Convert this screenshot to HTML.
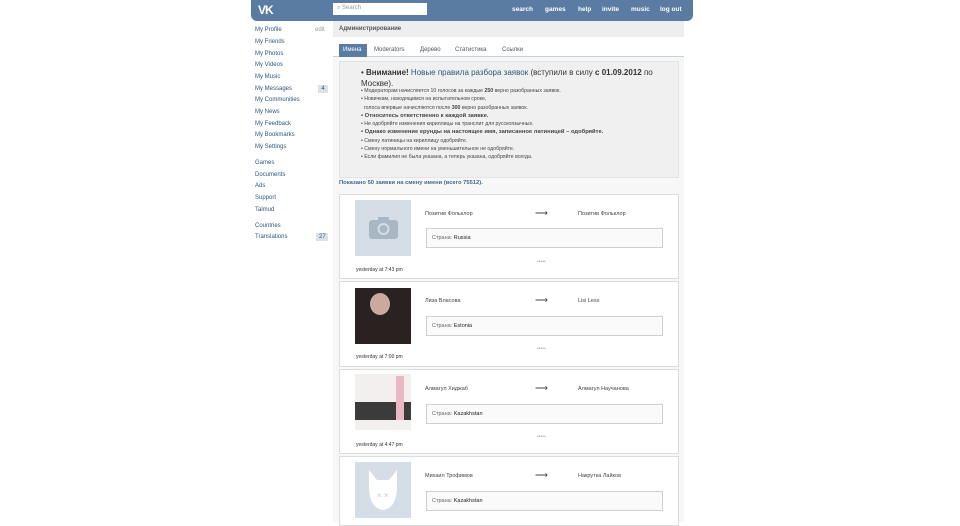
<!DOCTYPE html>
<html><head><meta charset="utf-8"><style>
*{margin:0;padding:0;box-sizing:border-box}
body{width:960px;height:522px;background:#fff;font-family:"Liberation Sans","Noto Sans CJK SC",sans-serif;position:relative;overflow:hidden;color:#333}
.a{position:absolute}
#hdr{left:251px;top:0;width:442px;height:21px;background:#5a7ca3;border-radius:0 0 6px 6px}
#srch{left:333px;top:3px;width:94px;height:12px;background:#fff;font-size:6px;color:#999;padding:2px 4px}
.nav{top:6px;font-size:6.5px;color:#fff;font-weight:bold}
.menu{left:255px;font-size:6px;color:#2b587a}
.cnt{left:318px;font-size:6px;background:#dae2e8;color:#2b587a;padding:1px 3px;width:10px;text-align:center}
#main{left:333px;top:21px;width:351px;height:501px;background:#f7f7f7}
#title{left:333px;top:21px;width:351px;height:16px;background:#eeeeee;font-size:6px;font-weight:bold;color:#555;padding:5px 6px}
#tabs{left:333px;top:37px;width:351px;height:20px;background:#fff;border-bottom:1px solid #c5d0db}
.tab{top:47px;font-size:6px;color:#555;}
#info{left:339px;top:61px;width:340px;height:117px;background:#f0f0f0;border:1px solid #e3e3e3}
.li{font-size:5.2px;color:#444;line-height:8.3px}
.card{left:339px;width:340px;background:#fff;border:1px solid #dcdcdc}
.img{left:355px;width:56px;height:56px}
.nm{font-size:5.5px;color:#444}
.box{left:426px;width:237px;height:20px;border:1px solid #cfcfcf;background:#fafafa;font-size:5.5px;color:#222;padding:6px 5px}
.ts{left:356px;font-size:5px;color:#333}
.dots{left:537px;font-size:5px;color:#aab}
</style></head><body>
<div class="a" id="hdr"></div>
<div class="a" style="left:258px;top:3px;font-size:12px;font-weight:bold;color:#fff;letter-spacing:-1px">VK</div>
<div class="a" id="srch">⌕ Search</div>
<div class="a nav" style="left:512px">search</div>
<div class="a nav" style="left:545px">games</div>
<div class="a nav" style="left:578px">help</div>
<div class="a nav" style="left:602px">invite</div>
<div class="a nav" style="left:631px">music</div>
<div class="a nav" style="left:660px">log out</div>

<div class="a menu" style="top:27px">My Profile</div><div class="a menu" style="top:27px;left:315px;color:#999">edit</div>
<div class="a menu" style="top:39px">My Friends</div>
<div class="a menu" style="top:51px">My Photos</div>
<div class="a menu" style="top:62px">My Videos</div>
<div class="a menu" style="top:74px">My Music</div>
<div class="a menu" style="top:86px">My Messages</div><div class="a cnt" style="top:85px">4</div>
<div class="a menu" style="top:97px">My Communities</div>
<div class="a menu" style="top:109px">My News</div>
<div class="a menu" style="top:121px">My Feedback</div>
<div class="a menu" style="top:132px">My Bookmarks</div>
<div class="a menu" style="top:144px">My Settings</div>
<div class="a menu" style="top:160px">Games</div>
<div class="a menu" style="top:172px">Documents</div>
<div class="a menu" style="top:183px">Ads</div>
<div class="a menu" style="top:195px">Support</div>
<div class="a menu" style="top:207px">Talmud</div>
<div class="a menu" style="top:223px">Countries</div>
<div class="a menu" style="top:234px">Translations</div><div class="a cnt" style="top:233px;width:12px;left:316px">27</div>

<div class="a" id="main"></div>
<div class="a" id="title">Администрирование</div>
<div class="a" id="tabs"></div>
<div class="a" style="left:339px;top:44px;width:28px;height:13px;background:#5a7ca3"></div>
<div class="a tab" style="left:343px;color:#fff">Имена</div>
<div class="a tab" style="left:374px">Moderators</div>
<div class="a tab" style="left:420px">Дерево</div>
<div class="a tab" style="left:455px">Статистика</div>
<div class="a tab" style="left:502px">Ссылки</div>

<div class="a" id="info"></div>
<div class="a" style="left:361px;top:67px;width:316px;font-size:8px;line-height:11px;color:#333">• <b>Внимание!</b> <span style="color:#2b587a">Новые правила разбора заявок</span> (вступили в силу <b>с 01.09.2012</b> по Москве).</div>
<div class="a li" style="left:361px;top:87px;width:316px">
• Модераторам начисляется 10 голосов за каждые <b>250</b> верно разобранных заявок.<br>
• Новичкам, находящимся на испытательном сроке,<br>&nbsp; голоса впервые начисляются после <b>300</b> верно разобранных заявок.<br>
<b style="font-size:5.8px">• Относитесь ответственно к каждой заявке.</b><br>
• Не одобряйте изменения кириллицы на транслит для русскоязычных.<br>
<b style="font-size:5.8px">• Однако изменение ерунды на настоящее имя, записанное латиницей – одобряйте.</b><br>
• Смену латиницы на кириллицу одобряйте.<br>
• Смену нормального имени на уменьшительное не одобряйте.<br>
• Если фамилия не была указана, а теперь указана, одобряйте всегда.</div>
<div class="a" style="left:339px;top:180px;font-size:5.8px;font-weight:bold;color:#45688e">Показано 50 заявки на смену имени (всего 75512).</div>

<div class="a card" style="top:194px;height:85px"></div>
<div class="a img" style="top:200px;background:#d5dde6"></div>
<svg class="a" style="left:369px;top:217px" width="29" height="22" viewBox="0 0 29 22"><rect x="0" y="3" width="29" height="19" rx="3" fill="#a9b6c4"/><rect x="9" y="0" width="11" height="5" rx="1" fill="#a9b6c4"/><circle cx="14.5" cy="12" r="6" fill="#d5dde6"/><circle cx="14.5" cy="12" r="4" fill="#a9b6c4"/></svg>
<div class="a nm" style="left:425px;top:211px">Позитив Фольклор</div>
<div class="a nm" style="left:535px;top:208px;font-size:9px">⟶</div>
<div class="a nm" style="left:578px;top:211px">Позитив Фольклор</div>
<div class="a box" style="top:228px"><span style="color:#666">Страна:</span> Russia</div>
<div class="a dots" style="top:259px">•••••</div>
<div class="a ts" style="top:267px">yesterday at 7:43 pm</div>

<div class="a card" style="top:281px;height:86px"></div>
<div class="a img" style="top:288px;background:#2a2221"></div>
<div class="a" style="left:370px;top:293px;width:20px;height:22px;border-radius:50%;background:#c9a9a0"></div>
<div class="a nm" style="left:425px;top:298px">Лиза Власова</div>
<div class="a nm" style="left:535px;top:295px;font-size:9px">⟶</div>
<div class="a nm" style="left:578px;top:298px">Lisi Less</div>
<div class="a box" style="top:316px"><span style="color:#666">Страна:</span> Estonia</div>
<div class="a dots" style="top:346px">•••••</div>
<div class="a ts" style="top:354px">yesterday at 7:00 pm</div>

<div class="a card" style="top:369px;height:85px"></div>
<div class="a img" style="top:374px;background:#f3efee"></div>
<div class="a" style="left:355px;top:402px;width:56px;height:18px;background:#3b3b3b"></div>
<div class="a" style="left:396px;top:376px;width:8px;height:44px;background:#e9b8c4"></div>
<div class="a nm" style="left:425px;top:386px">Алмагул Хиджаб</div>
<div class="a nm" style="left:535px;top:383px;font-size:9px">⟶</div>
<div class="a nm" style="left:578px;top:386px">Алмагул Научанова</div>
<div class="a box" style="top:404px"><span style="color:#666">Страна:</span> Kazakhstan</div>
<div class="a dots" style="top:434px">•••••</div>
<div class="a ts" style="top:442px">yesterday at 4:47 pm</div>

<div class="a card" style="top:456px;height:70px"></div>
<div class="a img" style="top:462px;background:#d5dde6"></div>
<svg class="a" style="left:366px;top:466px" width="34" height="48" viewBox="0 0 34 48"><path d="M3 4 L11 14 L23 14 L31 4 L31 20 Q31 42 17 44 Q3 42 3 20 Z" fill="#fff"/><text x="11" y="32" font-size="8" fill="#c0c8d2">× ×</text></svg>
<div class="a nm" style="left:425px;top:473px">Михаил Трофимов</div>
<div class="a nm" style="left:535px;top:470px;font-size:9px">⟶</div>
<div class="a nm" style="left:578px;top:473px">Накрутка Лайков</div>
<div class="a box" style="top:491px"><span style="color:#666">Страна:</span> Kazakhstan</div>
</body></html>
